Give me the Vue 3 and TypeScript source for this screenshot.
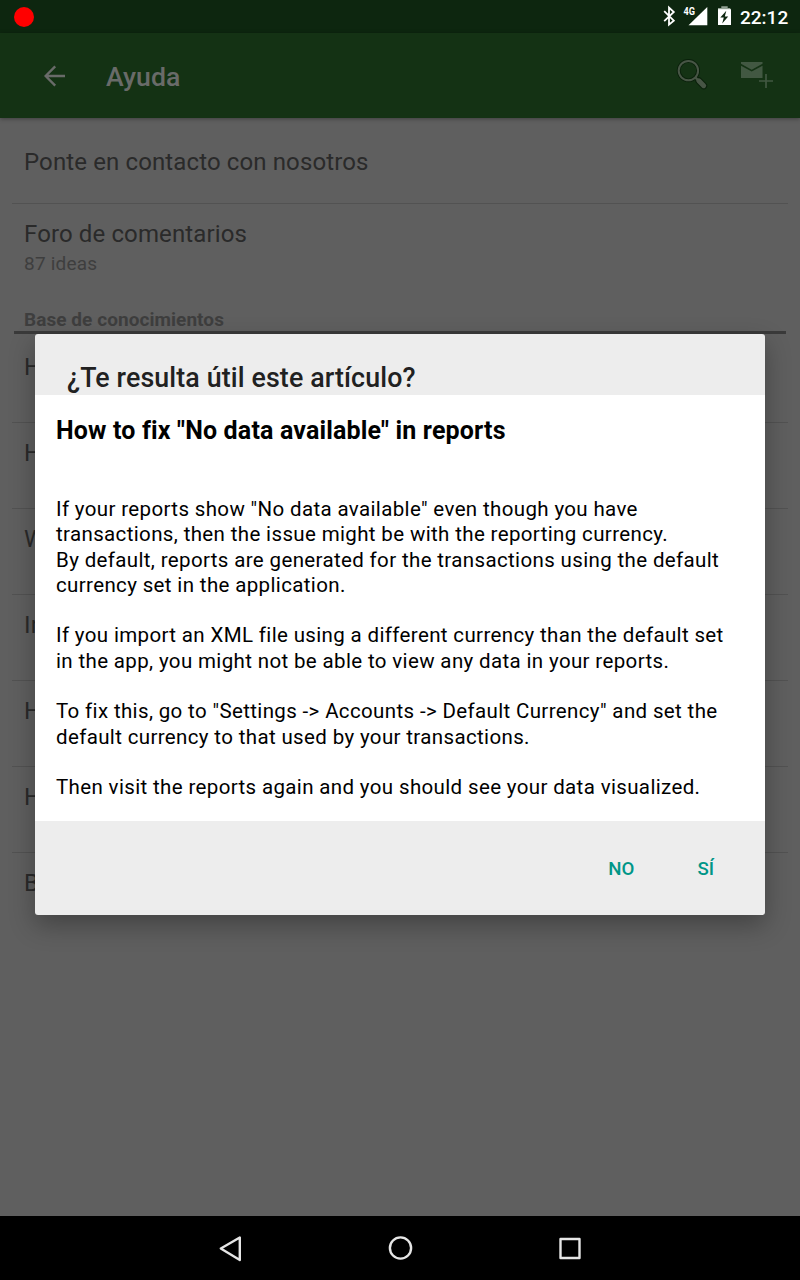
<script setup lang="ts">
const articles: string[] = ['H', 'H', 'W', 'In', 'H', 'H', 'B']

const lines: string[] = [
  'If your reports show "No data available" even though you have',
  'transactions, then the issue might be with the reporting currency.',
  'By default, reports are generated for the transactions using the default',
  'currency set in the application.',
  '',
  'If you import an XML file using a different currency than the default set',
  'in the app, you might not be able to view any data in your reports.',
  '',
  'To fix this, go to "Settings -> Accounts -> Default Currency" and set the',
  'default currency to that used by your transactions.',
  '',
  'Then visit the reports again and you should see your data visualized.',
]
</script>

<template>
  <div class="screen">
    <div class="status">
      <span class="record"></span>
      <svg class="status-icons" width="72" height="33" viewBox="0 0 72 33">
        <path d="M2.2 11.2 11.8 20.6 7 24.6V7.6L11.8 12 2.2 21.2" fill="none" stroke="#fff" stroke-width="1.8" />
        <text x="21.5" y="15" font-size="10" font-weight="700" fill="#fff" textLength="11.5" lengthAdjust="spacingAndGlyphs">4G</text>
        <path d="M45.3 7v18.3H26.5z" fill="#fff" />
        <path d="M59.3 6.2h6.4V8h2.6v3H56V8h3.3z" fill="#91a092" />
        <path d="M56 9.2h13V25H56z" fill="#fff" />
        <path d="M64.3 10.7 58.3 17.4h3.5l-1.6 6 6-7h-3.4z" fill="#0d260f" />
      </svg>
      <span class="clock">22:12</span>
    </div>
    <header class="bar">
      <svg class="back" width="22" height="22" viewBox="0 0 22 22">
        <path d="M21 11H2M11.2 1.4 1.6 11l9.6 9.6" fill="none" stroke="#696b69" stroke-width="2.4" />
      </svg>
      <h1>Ayuda</h1>
      <svg class="tools" width="100" height="34" viewBox="0 0 100 34">
        <path d="m23.8 22.8 4.9 4.9" stroke="#0a200b" stroke-width="7" stroke-linecap="round" />
        <circle cx="13.4" cy="12.6" r="9.7" fill="none" stroke="#0a200b" stroke-width="3.8" />
        <circle cx="13.4" cy="12.6" r="9.7" fill="none" stroke="#475545" stroke-width="2" />
        <path d="m20.2 19.4 3.5 3.5" stroke="#475545" stroke-width="2.2" />
        <path d="m23.8 22.8 4.9 4.9" stroke="#475545" stroke-width="5" stroke-linecap="round" />
        <path d="M66 4h21.5v1.8L76.7 11.8 66 5.8zM66 7.8l10.7 5.8 10.8-5.8v8.4V20H66z" fill="#425842" />
        <path d="M91 16v14M84 23h14" stroke="#143214" stroke-width="4" />
        <path d="M91 16v14M84 23h14" stroke="#425842" stroke-width="1.7" />
      </svg>
    </header>
    <main class="list">
      <div class="row contact"><span>Ponte en contacto con nosotros</span></div>
      <div class="row forum"><span>Foro de comentarios</span><small>87 ideas</small></div>
      <h2>Base de conocimientos</h2>
      <div v-for="(a, i) in articles" :key="i" class="row article"><span>{{ a }}</span></div>
    </main>
    <nav class="nav">
      <svg width="400" height="64" viewBox="0 0 400 64" fill="none" stroke="#e6e6e6" stroke-width="2.4" stroke-linejoin="round">
        <path d="M39.8 21.5v22.6L20.8 32.5z" />
        <circle cx="200.5" cy="32" r="10.6" />
        <path d="M360.5 23h19v19h-19z" />
      </svg>
    </nav>

    <section class="dialog">
      <h3>¿Te resulta útil este artículo?</h3>
      <article>
        <h4>How to fix "No data available" in reports</h4>
        <div class="text">
          <div v-for="(l, i) in lines" :key="i" class="line">{{ l }}</div>
        </div>
      </article>
      <footer><button>NO</button><button>SÍ</button></footer>
    </section>
  </div>
</template>

<style>
body { margin: 0; background: #000; }
</style>

<style scoped>
* { box-sizing: border-box; }
.screen {
  position: relative;
  display: flex;
  flex-direction: column;
  width: 800px;
  height: 1280px;
  overflow: hidden;
  background: #5f5f5f;
  font-family: Roboto, sans-serif;
}
.status {
  display: flex;
  align-items: center;
  height: 33px;
  padding: 0 11px 0 14px;
  background: #0d260f;
}
.record { width: 20px; height: 20px; border-radius: 50%; background: #f00; }
.status-icons { margin-left: auto; margin-right: 6px; }
.clock { width: 49px; font-size: 19px; font-weight: 500; color: #fff; line-height: 33px; padding-top: 2px; white-space: nowrap; }
.bar {
  display: flex;
  align-items: center;
  height: 85px;
  padding: 0 25px 0 44px;
  background: #143214;
  box-shadow: 0 1px 4px rgba(0, 0, 0, 0.35);
  z-index: 1;
}
h1 { margin: 2px 0 0 40px; font-size: 26.67px; font-weight: 500; color: #696b69; }
.tools { margin-left: auto; margin-top: -1px; }
.list { flex: 1; padding: 0 12px; color: #2a2a2a; }
.row { display: flex; flex-direction: column; padding: 14px 12px 0; font-size: 24px; line-height: 32px; letter-spacing: 0.12px; }
.contact { height: 86px; padding-top: 28px; border-bottom: 1px solid #525252; }
.forum { height: 101px; }
.row small { font-size: 19px; line-height: 26px; color: #3e3e3e; margin-top: 1px; letter-spacing: 0.2px; }
h2 {
  height: 29px;
  margin: 0 2px 3px;
  padding: 4px 10px 0;
  border-bottom: 3px solid #3a3a3a;
  font-size: 19px;
  line-height: 22px;
  font-weight: 700;
  letter-spacing: 0.06px;
  color: #3e3e3e;
}
.article { height: 86px; border-bottom: 1px solid #525252; }
.article:last-child { border-bottom: 0; }
.nav { display: flex; justify-content: center; height: 64px; background: #000; }
.dialog {
  position: absolute;
  left: 35px;
  top: 334px;
  z-index: 2;
  width: 730px;
  height: 581px;
  display: flex;
  flex-direction: column;
  overflow: hidden;
  border-radius: 3px;
  background: #ededed;
  box-shadow: 0 10px 26px rgba(0, 0, 0, 0.3);
}
h3 { height: 61px; margin: 0; padding: 28px 32px 0; font-size: 26.8px; line-height: 32px; font-weight: 500; letter-spacing: 0.12px; color: #212121; }
article { height: 426px; padding: 20px 21px 0; background: #fff; color: #000; }
h4 { margin: 0; font-size: 25px; line-height: 32px; font-weight: 700; letter-spacing: 0.16px; white-space: nowrap; }
.text { margin-top: 50px; font-size: 20.5px; letter-spacing: 0.36px; }
.line { height: 25.3px; line-height: 25.3px; white-space: nowrap; }
footer { flex: 1; display: flex; justify-content: flex-end; align-items: center; gap: 63px; padding: 1px 51px 0 0; }
button { padding: 0; border: 0; background: none; font: 500 18.67px/24px Roboto, sans-serif; color: #009688; }
</style>
